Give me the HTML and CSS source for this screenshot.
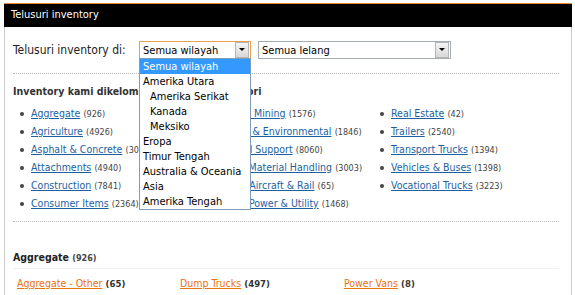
FILE: index.html
```html
<!DOCTYPE html>
<html lang="id">
<head>
  <meta charset="UTF-8">
  <title>Telusuri inventory</title>
  <link rel="stylesheet" href="styles.css">
</head>
<body>
  <div class="panel">
    <div class="panel-head">Telusuri inventory</div>
    <div class="panel-body">
      <div class="filter-row">
        <span class="filter-label">Telusuri inventory di:</span>
        <div class="select select-region is-open">
          <span class="select-value">Semua wilayah</span>
          <span class="select-btn"></span>
          <ul class="select-list">
            <li class="is-selected">Semua wilayah</li>
            <li>Amerika Utara</li>
            <li class="sub">Amerika Serikat</li>
            <li class="sub">Kanada</li>
            <li class="sub">Meksiko</li>
            <li>Eropa</li>
            <li>Timur Tengah</li>
            <li>Australia &amp; Oceania</li>
            <li>Asia</li>
            <li>Amerika Tengah</li>
          </ul>
        </div>
        <div class="select select-auction">
          <span class="select-value">Semua lelang</span>
          <span class="select-btn"></span>
        </div>
      </div>

      <div class="divider"></div>

      <h3 class="group-title">Inventory kami dikelompokkan dalam kategori</h3>
      <div class="cat-grid">
        <ul class="cat-list">
          <li><a href="#">Aggregate</a> <span class="count">(926)</span></li>
          <li><a href="#">Agriculture</a> <span class="count">(4926)</span></li>
          <li><a href="#">Asphalt &amp; Concrete</a> <span class="count">(3088)</span></li>
          <li><a href="#">Attachments</a> <span class="count">(4940)</span></li>
          <li><a href="#">Construction</a> <span class="count">(7841)</span></li>
          <li><a href="#">Consumer Items</a> <span class="count">(2364)</span></li>
        </ul>
        <ul class="cat-list">
          <li><a href="#">Offshore Mining</a> <span class="count">(1576)</span></li>
          <li><a href="#">Forestry &amp; Environmental</a> <span class="count">(1846)</span></li>
          <li><a href="#">Financial Support</a> <span class="count">(8060)</span></li>
          <li><a href="#">Hoist &amp; Material Handling</a> <span class="count">(3003)</span></li>
          <li><a href="#">Marine, Aircraft &amp; Rail</a> <span class="count">(65)</span></li>
          <li><a href="#">Electric Power &amp; Utility</a> <span class="count">(1468)</span></li>
        </ul>
        <ul class="cat-list">
          <li><a href="#">Real Estate</a> <span class="count">(42)</span></li>
          <li><a href="#">Trailers</a> <span class="count">(2540)</span></li>
          <li><a href="#">Transport Trucks</a> <span class="count">(1394)</span></li>
          <li><a href="#">Vehicles &amp; Buses</a> <span class="count">(1398)</span></li>
          <li><a href="#">Vocational Trucks</a> <span class="count">(3223)</span></li>
        </ul>
      </div>

      <div class="divider"></div>

      <div class="section">
        <h3 class="section-title">Aggregate <span class="count">(926)</span></h3>
        <div class="sub-grid">
          <div class="sub-item"><a href="#">Aggregate - Other</a> <b>(65)</b></div>
          <div class="sub-item"><a href="#">Dump Trucks</a> <b>(497)</b></div>
          <div class="sub-item"><a href="#">Power Vans</a> <b>(8)</b></div>
        </div>
      </div>
    </div>
  </div>
</body>
</html>
```

FILE: styles.css
```css
body {
  margin: 0;
  padding: 3px 3px 0 4px;
  font-family: "DejaVu Sans Condensed", "DejaVu Sans", Verdana, sans-serif;
  font-size: 11px;
  color: #333;
  background: #fff;
  height: 295px;
  box-sizing: border-box;
  overflow: hidden;
}

.panel {
  border-top: 1px solid #e8822e;
}

.panel-head {
  background-color: #000;
  color: #fff;
  font-size: 11px;
  height: 23px;
  line-height: 22px;
  padding-left: 7px;
}

.panel-body {
  border-left: 1px solid #ccc;
  border-right: 1px solid #ccc;
  padding: 0 8px;
  height: 280px;
}

.filter-row {
  display: flex;
  align-items: center;
  height: 46px;
}

.filter-label {
  font-size: 12px;
  color: #222;
  width: 126px;
}

.select {
  position: relative;
  display: flex;
  align-items: center;
  height: 16px;
  border: 1px solid #a5acb2;
  background: #fff;
  font-size: 11px;
  color: #000;
}

.select-region {
  width: 110px;
  border-color: #e9a24c;
}

.select-auction {
  width: 191px;
  margin-left: 7px;
}

.select-value {
  flex: 1;
  padding-left: 3px;
  white-space: nowrap;
}

.select-btn {
  width: 12px;
  height: 14px;
  margin-right: 1px;
  border: 1px solid #b4b4b4;
  background: linear-gradient(#f4f4f4, #d8d8d8);
  position: relative;
}

.select-btn::after {
  content: "";
  position: absolute;
  left: 3px;
  top: 5px;
  border-left: 3px solid transparent;
  border-right: 3px solid transparent;
  border-top: 3px solid #000;
}

.select-list {
  position: absolute;
  left: -1px;
  top: 16px;
  width: 110px;
  margin: 0;
  padding: 0;
  list-style: none;
  background: #fff;
  border: 1px solid #7f9db9;
  z-index: 5;
}

.select-list li {
  height: 15px;
  line-height: 15px;
  padding-left: 3px;
  color: #000;
  white-space: nowrap;
}

.select-list li.sub {
  padding-left: 10px;
}

.select-list li.is-selected {
  background-color: #3399ff;
  color: #fff;
}

.divider {
  border-top: 1px dotted #bbb;
  margin-right: 4px;
}

.group-title {
  margin: 0;
  padding: 8px 0 4px;
  font-size: 10.5px;
  font-weight: bold;
  color: #333;
  line-height: 18px;
  white-space: nowrap;
}

.cat-grid {
  display: grid;
  grid-template-columns: 180px 180px 1fr;
  padding-bottom: 9px;
}

.cat-list {
  margin: 0;
  padding: 0 0 0 18px;
  list-style: none;
}

.cat-list li {
  position: relative;
  height: 18px;
  line-height: 18px;
  white-space: nowrap;
}

.cat-list li::before {
  content: "";
  position: absolute;
  left: -11px;
  top: 8px;
  width: 4px;
  height: 4px;
  border-radius: 50%;
  background: #444;
}

.cat-list a {
  color: #1d5f9f;
  font-size: 10.5px;
}

.count {
  font-size: 9px;
  color: #444;
}

.section {
  padding-top: 26px;
}

.section-title {
  margin: 0;
  font-size: 10.5px;
  font-weight: bold;
  color: #222;
  height: 20px;
  line-height: 18px;
  border-bottom: 1px solid #eee;
  margin-right: 4px;
}

.sub-grid {
  display: grid;
  grid-template-columns: 163px 164px 1fr;
  padding-left: 4px;
  line-height: 28px;
}

.sub-item a {
  color: #e8730f;
  font-size: 10.5px;
}

.sub-item b {
  font-size: 9.5px;
  color: #333;
}
```
